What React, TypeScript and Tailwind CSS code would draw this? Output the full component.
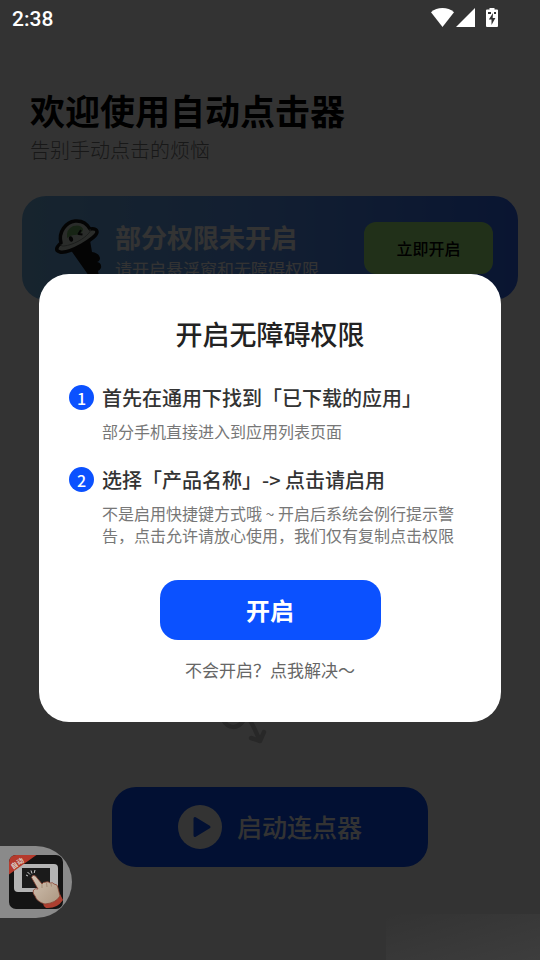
function StatusBar() {
  return (
    <div className="absolute inset-x-0 top-0 flex items-start justify-between pt-2 pl-3 pr-[42px] text-white">
      <span className="font-[Roboto] text-[21px] leading-[22px] font-medium">2:38</span>
      <div className="flex items-start">
        <svg className="h-[19px] w-[23px]" viewBox="0 0 23 19" fill="currentColor">
          <path d="M0 4.2C3.2 1.4 7.2 0 11.5 0S19.8 1.4 23 4.2L11.5 19z" />
        </svg>
        <svg className="ml-[2px] h-[19px] w-[19px]" viewBox="0 0 19 19" fill="currentColor">
          <path d="M19 0v19H0z" />
        </svg>
        <svg className="ml-[11px] h-5 w-3" viewBox="0 0 12 20">
          <path fill="currentColor" d="M3.5 0h5v1.5H11q1 0 1 1V18q0 1-1 1H1q-1 0-1-1V2.500q0-1 1-1h2.500z" />
          <path fill="#333" d="M7 5 2.800 11.500h2.700V17L9.400 10H6.700z" />
          <path fill="#333" d="M2 4h3v2H2zM8 4h2v2H8z" />
        </svg>
      </div>
    </div>
  );
}

function KeyMascot() {
  return (
    <svg className="h-16 w-14 shrink-0" viewBox="0 0 56 64">
      <path d="m20 37 20-9 2 12q7 1 8 6 0 3-3 4 5 1 4 6-1 2-3 3l1 5H39z" fill="#151515" />
      <path
        d="M11 31C8 20 16 10 25 9q10-1 15 8 7-1 7 3c0 6-28 22-37 20-5-1-4-5 1-9z"
        fill="#d2dad2"
        stroke="#151515"
        strokeWidth="3.500"
        strokeLinejoin="round"
      />
      <path d="M17 26q-1-9 6-12 8-2 10 3c0 5-6 6-9 6q-3 0-7 3z" fill="#76b66a" />
      <path d="M11 32q0 3 3 2c9-1 20-7 25-13q2-2 1-4" fill="none" stroke="#8a948c" strokeWidth="1" />
      <ellipse cx="21" cy="27" rx="2" ry="2.800" transform="rotate(-20 21 27)" fill="#151515" />
      <path d="m31 18-2.500 4 4 .5" fill="none" stroke="#151515" strokeWidth="2" strokeLinejoin="round" />
    </svg>
  );
}

function ClickerLogo() {
  return (
    <svg className="h-[54px] w-[54px]" viewBox="0 0 54 54">
      <defs>
        <clipPath id="logo-clip">
          <rect width="54" height="54" rx="7" />
        </clipPath>
        <linearGradient id="hand" x1="0" y1="0" x2="1" y2="1">
          <stop offset="0" stopColor="#d2c2b2" />
          <stop offset="1" stopColor="#ab9680" />
        </linearGradient>
      </defs>
      <g clipPath="url(#logo-clip)">
        <rect width="54" height="54" fill="#141414" />
        <rect x="5" y="9" width="44" height="28" rx="4" fill="#b4b4b4" />
        <rect x="13" y="13" width="28" height="20" fill="#1b1b1b" />
        <path d="M0 0h27.500L0 19.500z" fill="#b53a2c" />
        <text x="4" y="14.500" transform="rotate(-35 4 14.500)" fontSize="7" fontWeight="700" fill="#d8cfc8">
          自动
        </text>
        <path d="m17 20 2 1M18.500 17l2.500 2.500M22 15.500l1 3M26 15l-.8 3" stroke="#ccc" strokeWidth="1" />
        <path d="M34 48q11-1 17-9l3 6q-6 9-17 8-3-2-3-5z" fill="#ad3f30" />
        <path
          d="M22.500 22.500q1-3.500 4-1.500l6.500 8q1-2 4-2 2-1 4 1 3-1 4 1 4 0 4 4l2 8q-4 7-15 8-8-2-10-8-3-3-1.500-6 1.500-2 4.500-1z"
          fill="url(#hand)"
          stroke="#8c4434"
          strokeWidth=".8"
          strokeLinejoin="round"
        />
        <path d="M33 29v4M37.500 28l.5 4M42 28.500l.5 3" stroke="#967b66" strokeWidth=".7" />
      </g>
    </svg>
  );
}

const steps = [
  {
    title: "首先在通用下找到「已下载的应用」",
    description: "部分手机直接进入到应用列表页面",
  },
  {
    title: "选择「产品名称」-> 点击请启用",
    description: "不是启用快捷键方式哦 ~ 开启后系统会例行提示警告，点击允许请放心使用，我们仅有复制点击权限",
  },
];

export default function App() {
  return (
    <div className="relative min-h-screen overflow-hidden bg-white font-['Noto_Sans_CJK_SC',sans-serif]">
      {/* Home page */}
      <main className="flex flex-col px-[22px] pt-[90px]">
        <h1 className="px-2 text-[35px] leading-10 font-bold text-black">欢迎使用自动点击器</h1>
        <p className="mt-2 px-2 text-xl leading-6 font-light text-[#777]">告别手动点击的烦恼</p>

        <section className="mt-[34px] flex h-[104px] items-start rounded-3xl bg-linear-to-r from-[#73b4e6] via-[#5a96f5] to-[#326af5] pl-7">
          <div className="pt-4">
            <KeyMascot />
          </div>
          <div className="ml-[9px] flex-1 pt-[25px] whitespace-nowrap text-white">
            <h2 className="text-[26px] leading-8 font-bold">部分权限未开启</h2>
            <p className="mt-1 text-[17px] leading-6">请开启悬浮窗和无障碍权限</p>
          </div>
          <button className="mt-[26px] mr-[25px] h-[52px] w-[129px] rounded-xl bg-[#a5f07d] text-base font-medium text-black">
            立即开启
          </button>
        </section>

        <svg className="mt-[400px] ml-[198px] h-[50px] w-[50px]" viewBox="0 0 50 50" fill="none" stroke="#c6c6c6" strokeWidth="4.500" strokeLinecap="round" strokeLinejoin="round">
          <path d="M3 20c5 9 15 9 20 1M28 18c4 4 8 14 12 23M31 38l9 3 4-9" />
        </svg>

        <button className="mt-[37px] flex h-20 w-[316px] items-center justify-center gap-[15px] self-center rounded-3xl bg-[#0b51ff] text-white">
          <svg className="h-11 w-11" viewBox="0 0 44 44">
            <circle cx="22" cy="22" r="22" fill="white" />
            <path d="M17 13.500v17L31 22z" fill="#0b51ff" stroke="#0b51ff" strokeWidth="3" strokeLinejoin="round" />
          </svg>
          <span className="text-[25px] font-medium">启动连点器</span>
        </button>
      </main>

      {/* Dialog */}
      <div className="absolute inset-0 flex items-center justify-center bg-black/80 px-[39px] pt-9">
        <section role="dialog" aria-labelledby="dialog-title" className="flex w-full max-w-xl flex-col rounded-[30px] bg-white px-[30px] pt-10 pb-10">
          <h2 id="dialog-title" className="text-center text-[27px] leading-10 font-medium text-[#222]">
            开启无障碍权限
          </h2>
          <ol className="mt-7 flex flex-col gap-[22px] pr-2">
            {steps.map((step, index) => (
              <li key={index} className="flex gap-2">
                <span className="mt-[3px] flex h-[25px] w-[25px] shrink-0 items-center justify-center rounded-full bg-[#0b51ff] text-base leading-none font-medium text-white">
                  {index + 1}
                </span>
                <div>
                  <h3 className="text-xl leading-8 font-medium text-[#333]">{step.title}</h3>
                  <p className="mt-[6px] text-base leading-[22px] text-[#777]">{step.description}</p>
                </div>
              </li>
            ))}
          </ol>
          <button className="mt-[34px] h-[60px] w-[221px] self-center rounded-[18px] bg-[#0b51ff] text-2xl font-bold text-white">
            开启
          </button>
          <a href="#help" className="mt-[18px] self-center text-[17px] leading-6 text-[#666]">
            不会开启？点我解决～
          </a>
        </section>
      </div>

      <StatusBar />

      {/* Floating shortcut */}
      <button aria-label="自动点击器" className="absolute bottom-[42px] left-0 flex h-[72px] w-[72px] items-center justify-center rounded-r-full bg-[#8a8a8a]">
        <ClickerLogo />
      </button>
      <div className="pointer-events-none absolute right-0 bottom-0 h-[46px] w-[154px] bg-linear-to-br from-white/0 to-white/5" />
    </div>
  );
}
